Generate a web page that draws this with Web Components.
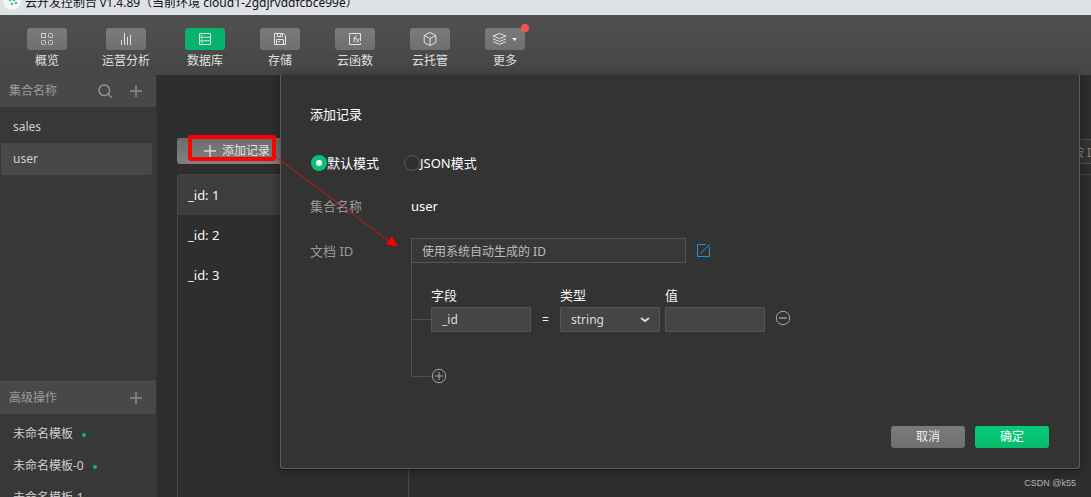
<!DOCTYPE html>
<html lang="zh-CN">
<head>
<meta charset="utf-8">
<title>云开发控制台</title>
<style>
html, body { height: 100%; }
body { margin: 0; overflow: hidden; font-family: "Noto Sans", "Noto Sans CJK SC", sans-serif; font-size: 12px; line-height: 16px; color: #d4d4d4; background: #2e2e2e; }
</style>
</head>
<body>
<cloud-console></cloud-console>
<script>
const define = (name, html) => {
  const tpl = document.createElement('template');
  tpl.innerHTML = html;
  customElements.define(name, class extends HTMLElement {
    constructor() {
      super();
      this.attachShadow({ mode: 'open' }).append(tpl.content.cloneNode(true));
    }
  });
};

define('title-bar', `
<style>
:host { display: flex; align-items: flex-end; height: 15px; overflow: hidden; background: #dee1e6; color: #111; font-size: 12px; line-height: 24px; white-space: nowrap; }
svg { flex: none; margin: 0 4px 5px 3px; }
span { flex: none; }
</style>
<svg width="18" height="18" viewBox="0 0 18 18"><circle cx="9" cy="9" r="9" fill="#f5f7f7"/><g fill="#2fc77e"><circle cx="7" cy="8" r="1.3"/><circle cx="11" cy="8" r="1.3"/><circle cx="13" cy="11" r="1.3"/><circle cx="9" cy="12" r="1.2"/></g></svg>
<span><slot></slot></span>`);

define('nav-item', `
<style>
:host { display: block; }
button { display: flex; flex-direction: column; align-items: center; gap: 2px; border: 0; padding: 0; background: none; color: #e0e0e0; font: inherit; min-width: 40px; white-space: nowrap; }
.key { position: relative; display: flex; align-items: center; justify-content: center; width: 40px; height: 22px; border-radius: 3px; background: linear-gradient(#7b7b7b, #707070); }
:host([active]) .key { background: #07b36b; }
.badge { display: none; position: absolute; top: -4px; right: -4px; width: 8px; height: 8px; border-radius: 50%; background: #fa5151; }
:host([new]) .badge { display: block; }
.label { line-height: 18px; }
</style>
<button type="button"><span class="key"><slot name="icon"></slot><i class="badge"></i></span><span class="label"><slot></slot></span></button>`);

define('console-nav', `
<style>
:host { display: flex; align-items: flex-start; gap: 35px; height: 60px; box-sizing: border-box; padding: 13px 27px 0; background: linear-gradient(#505050, #464646); }
svg { fill: none; stroke: #e3e3e3; stroke-width: 1; display: block; }
</style>
<nav-item><svg slot="icon" width="14" height="14"><g stroke="#d0d0d0"><rect x="1.500" y="1.500" width="4" height="4"/><rect x="8.500" y="1.500" width="4" height="4" rx="1"/><rect x="1.500" y="8.500" width="4" height="4" rx="1"/><rect x="8.500" y="8.500" width="4" height="4" rx="1"/></g></svg>概览</nav-item>
<nav-item><svg slot="icon" width="14" height="14"><path d="M2.500 13V8M5.500 13V1M8.500 13V5M11.500 13V3"/></svg>运营分析</nav-item>
<nav-item active><svg slot="icon" width="14" height="14"><path d="M1.500 1.500h11v11h-11zM1.500 5.200h11M1.500 8.800h11M3 3.500h1.500M3 7h1.500M3 10.500h1.500"/></svg>数据库</nav-item>
<nav-item><svg slot="icon" width="14" height="14"><path d="M1.500 1.500h9l2 2v9h-11zM4.500 1.500v3h5v-3M3.500 12.500v-5h7v5M7.500 2v1.500M5 9.500h2"/></svg>存储</nav-item>
<nav-item><svg slot="icon" width="14" height="14"><path d="M12.500 9v-7.500h-11v11h11v-1.500"/><path d="M8.800 4.200c-1-.8-1.700-.1-1.900.9l-1 5M5.400 6.500h2.800M8.400 6.500l2.600 4M11.300 6.500l-3.300 4"/></svg>云函数</nav-item>
<nav-item><svg slot="icon" width="14" height="14"><path d="M7 .5l5.800 3v7l-5.800 3-5.800-3v-7zM1.200 3.500L7 6.500l5.800-3M7 6.500v7"/></svg>云托管</nav-item>
<nav-item new><svg slot="icon" width="26" height="14"><path d="M7.500 1.500l6.500 2.600-6.500 2.600L1 4.100zM1 6.900l6.500 2.600L14 6.900M1 9.700l6.500 2.600L14 9.700"/><path d="M20 6h5l-2.500 3z" fill="#eee" stroke="none"/></svg>更多</nav-item>`);

define('side-head', `
<style>
:host { display: flex; align-items: center; gap: 18px; box-sizing: border-box; height: 32px; padding: 0 14px 0 9px; background: #484848; color: #9c9c9c; border-radius: 0 2px 2px 0; }
span { flex: 1; }
button { border: 0; padding: 0; background: none; display: flex; }
svg { fill: none; stroke: #9a9a9a; }
.find { display: none; }
:host([search]) .find { display: flex; }
</style>
<span><slot></slot></span>
<button class="find" type="button" aria-label="搜索"><svg width="14" height="14" stroke-width="1.300"><circle cx="6.300" cy="6.300" r="5.300"/><path d="M10 10l3.500 3.500"/></svg></button>
<button type="button" aria-label="添加"><svg width="12" height="12"><path d="M6 0v12M0 6h12" stroke="#7d7d7d" stroke-width="2"/></svg></button>`);

define('side-link', `
<style>
:host { display: block; }
a { display: flex; align-items: center; gap: 9px; height: 32px; margin: 0 4px 0 1px; padding: 0 12px; border-radius: 2px; color: #cfcfcf; text-decoration: none; white-space: nowrap; }
:host([selected]) a { background: #484848; }
i { display: none; width: 4px; height: 4px; border-radius: 50%; background: #07c160; margin-top: 2px; }
:host([dot]) i { display: block; }
</style>
<a href="#"><slot></slot><i></i></a>`);

define('side-bar', `
<style>
:host { display: flex; flex-direction: column; box-sizing: border-box; width: 157px; flex: none; background: #383838; border-right: 1px solid #333; overflow: hidden; }
nav { padding-top: 4px; }
.top { flex: 1 0 auto; }
.bottom { flex: none; height: 116px; box-sizing: border-box; border-top: 1px solid #505050; overflow: hidden; }
</style>
<section class="top"><side-head search>集合名称</side-head><nav><side-link>sales</side-link><side-link selected>user</side-link></nav></section>
<section class="bottom"><side-head>高级操作</side-head><nav><side-link dot>未命名模板</side-link><side-link dot>未命名模板-0</side-link><side-link dot>未命名模板-1</side-link></nav></section>`);

define('record-view', `
<style>
:host { display: flex; flex-direction: column; gap: 10px; flex: 1; min-width: 0; padding: 63px 0 0 20px; }
.tools { display: flex; justify-content: space-between; height: 26px; }
.add { display: flex; align-items: center; gap: 5px; border: 0; border-radius: 3px; padding: 0 26px; background: linear-gradient(#6d6d6d, #808080); color: #e2e2e2; font: inherit; }
input { box-sizing: border-box; height: 25px; width: 160px; margin-right: -60px; border: 1px solid #505050; background: #333; font: inherit; color: #888; padding: 0 0 0 80px; margin-top: 1px; }
.data { flex: 1; display: flex; border-top: 1px solid #444; border-left: 1px solid #484848; border-radius: 3px 0 0 0; }
ul { list-style: none; margin: 0; padding: 0; width: 230px; border-right: 1px solid #484848; font-size: 13px; color: #f4f4f4; }
li { height: 40px; line-height: 40px; padding-left: 10px; }
li:first-child { background: #3e3e3e; }
</style>
<div class="tools"><button class="add" type="button"><svg width="14" height="14"><path d="M7 1v12M1 7h12" stroke="#d4d4d4" stroke-width="1.500"/></svg>添加记录</button><input type="text" aria-label="搜索" value="按 ID"></div>
<div class="data"><ul><li>_id: 1</li><li>_id: 2</li><li>_id: 3</li></ul></div>`);

define('mode-option', `
<style>
:host { display: block; }
label { display: flex; align-items: center; height: 18px; white-space: nowrap; }
input { appearance: none; box-sizing: border-box; width: 16px; height: 16px; margin: 0 0 0 1px; border: 1px solid #585858; border-radius: 50%; background: #303030; }
input:checked { border: 5px solid #07c472; background: #fff; }
</style>
<label><input type="radio"><slot></slot></label>`);

define('push-button', `
<style>
:host { display: block; }
button { display: block; width: 74px; height: 22px; border: 0; border-radius: 3px; padding: 0; font: inherit; color: #eee; background: linear-gradient(#7b7b7b, #707070); }
:host([primary]) button { background: linear-gradient(#06ca78, #07bb6b); color: #fff; }
</style>
<button type="button"><slot></slot></button>`);

define('field-tree', `
<style>
:host { display: block; padding: 22px 0 0 1px; background: linear-gradient(#505050, #505050) 0 0 / 1px calc(100% - 7px) no-repeat; }
.row { display: grid; grid-template-columns: 19px 100px 29px 100px 5px 100px 10px 16px; row-gap: 2px; align-items: center; color: #f4f4f4; }
label { font-size: 13px; line-height: 20px; }
label[for=f] { grid-column: 2; } label[for=t] { grid-column: 4; } label[for=v] { grid-column: 6; }
.branch { grid-column: 1; height: 1px; background: #505050; }
input, select { box-sizing: border-box; width: 100%; height: 25px; border: 1px solid #555; border-radius: 1px; background: #454545; color: #ddd; font: inherit; padding: 0 10px; }
select { appearance: none; display: block; }
.pick { display: grid; align-items: center; }
.pick > * { grid-area: 1 / 1; }
.pick svg { justify-self: end; margin-right: 10px; pointer-events: none; }
.eq { text-align: center; }
button { border: 0; padding: 0; background: none; display: flex; }
svg { fill: none; stroke: #a8a8a8; }
.del { grid-column: 8; padding-bottom: 3px; }
.more { display: flex; align-items: center; margin-top: 36px; }
.more .branch { width: 19px; }
</style>
<div class="row">
<label for="f">字段</label><label for="t">类型</label><label for="v">值</label>
<i class="branch"></i><input id="f" type="text" value="_id"><span class="eq">=</span>
<span class="pick"><select id="t"><option>string</option><option>number</option></select><svg width="10" height="8"><path d="M1 2l4 3 4-3" stroke="#ddd" stroke-width="1.800"/></svg></span>
<i></i><input id="v" type="text">
<button class="del" type="button" aria-label="删除"><svg width="16" height="16"><circle cx="8" cy="8" r="6.700"/><path d="M4 8h8" stroke-width="1.300"/></svg></button>
</div>
<div class="more"><i class="branch"></i><button type="button" aria-label="添加字段"><svg width="16" height="16"><circle cx="8" cy="8" r="6.700"/><path d="M4 8h8M8 4v8"/></svg></button></div>`);

define('record-dialog', `
<style>
:host { box-sizing: border-box; display: flex; flex-direction: column; padding: 29px 30px 20px 29px; border: 1px solid #5c5c5c; border-top: 0; border-radius: 0 0 3px 3px; background: #333; color: #fff; font-size: 13px; box-shadow: 0 1px 0 #161616, 0 2px 12px rgba(0,0,0,.4); }
h2 { margin: 0; font-size: 13px; font-weight: 400; line-height: 20px; }
.modes { display: flex; gap: 24px; margin-top: 30px; }
.form { display: grid; grid-template-columns: 101px 1fr; align-items: center; margin-top: 24px; }
.name { color: #999; line-height: 20px; }
.form > .id, .doc { margin-top: 22px; }
.doc { display: flex; align-items: center; gap: 11px; }
.doc input { box-sizing: border-box; width: 275px; height: 25px; padding: 0 10px; border: 1px solid #555; background: #383838; color: #bdbdbd; font: inherit; font-size: 12px; }
.doc button { padding: 0; border: 0; background: none; display: flex; }
field-tree { grid-column: 2; font-size: 12px; }
.actions { display: flex; justify-content: flex-end; gap: 10px; margin-top: auto; font-size: 12px; }
</style>
<h2>添加记录</h2>
<div class="modes"><mode-option class="on">默认模式</mode-option><mode-option>JSON模式</mode-option></div>
<div class="form">
<span class="name">集合名称</span><span>user</span>
<label class="name id" for="doc">文档 ID</label>
<div class="doc"><input id="doc" type="text" value="使用系统自动生成的 ID"><button type="button" aria-label="编辑"><svg width="13" height="13" fill="none" stroke="#1f93dc"><path d="M9 .5H.5v12h12V3M3.500 9.500L12.500 .5"/></svg></button></div>
<field-tree></field-tree>
</div>
<div class="actions"><push-button>取消</push-button><push-button primary>确定</push-button></div>`);

define('cloud-console', `
<style>
:host { display: flex; flex-direction: column; position: relative; height: 100vh; overflow: hidden; }
main { flex: 1; display: flex; min-height: 0; position: relative; }
record-dialog { position: absolute; top: 0; left: 280px; right: 11px; height: 394px; }
.mark { position: absolute; left: 188px; top: 60px; }
.credit { position: absolute; right: 15px; bottom: 6px; font: 9px/16px "Liberation Sans", sans-serif; color: #b4b4b4; }
</style>
<title-bar>云开发控制台 v1.4.89（当前环境 cloud1-2gdjrvddfcbce99e）</title-bar>
<console-nav></console-nav>
<main>
<side-bar></side-bar>
<record-view></record-view>
<record-dialog></record-dialog>
<svg class="mark" width="214" height="120" fill="none" stroke="#f00"><rect x="2" y="2" width="84" height="22" rx="1" stroke-width="4"/><path d="M88 22L201 106" stroke="#e01010"/><path d="M210 112l-12-3 6-8z" fill="#f00" stroke="none"/></svg>
<span class="credit">CSDN @k55</span>
</main>`);

document.querySelector('cloud-console').shadowRoot.querySelector('record-dialog').shadowRoot
  .querySelector('.on').shadowRoot.querySelector('input').checked = true;
</script>
</body>
</html>
